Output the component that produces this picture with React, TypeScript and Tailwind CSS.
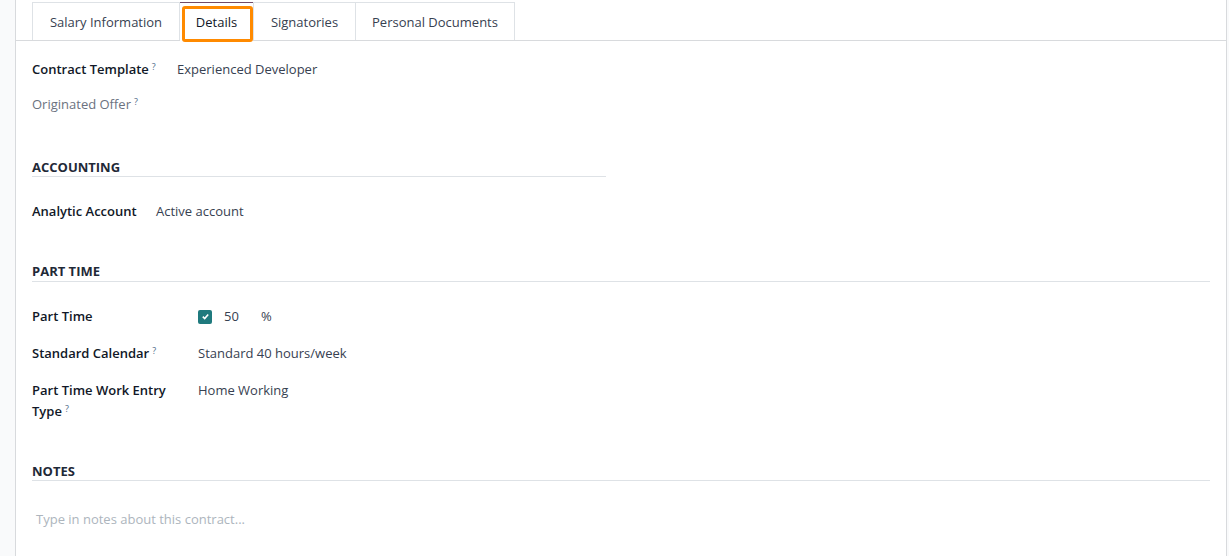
import React from "react";

const Q = () => <sup className="ml-[3px] text-[9px] font-normal text-[#4f6b8a] relative -top-[4px]">?</sup>;

const Heading = ({ children, className = "" }: { children: React.ReactNode; className?: string }) => (
  <div className={`border-b border-[#dee2e6] text-[13px] font-bold uppercase leading-[18px] text-[#1f2937] ${className}`}>{children}</div>
);

export default function App() {
  return (
    <div className="flex h-[556px] w-[1229px] bg-[#f9fafb] pl-[15px] pr-[2px] text-[13px] leading-[21px] text-[#374151]" style={{ fontFamily: '"Open Sans", "Noto Sans", sans-serif' }}>
      <div className="flex flex-1 flex-col border-x border-[#d8dadd] bg-white">
        {/* tabs */}
        <div className="mt-[2px] flex border-b border-[#d8dadd] pl-4">
          <div className="flex h-[38px] w-[148px] items-center justify-center border-x border-t border-[#dee2e6] pt-[2px]">Salary Information</div>
          <div className="relative -mb-px flex h-[39px] w-[73px] items-center justify-center border-t border-t-[#714b67] bg-white pt-[1px] text-[#111827]">
            <div className="absolute left-[2px] right-0 top-[3px] -bottom-px rounded-[3px] border-[3px] border-[#ff8a00]" />
            Details
          </div>
          <div className="flex h-[38px] w-[103px] items-center justify-center border-x border-t border-[#dee2e6] pt-[2px]">Signatories</div>
          <div className="flex h-[38px] w-[159px] items-center justify-center border-r border-t border-[#dee2e6] pt-[2px]">Personal Documents</div>
        </div>

        <div className="px-4">
          <div className="w-[574px]">
            <div className="mt-[18px] flex">
              <div className="w-[145px] font-semibold text-[#111827]">Contract Template<Q /></div>
              <div>Experienced Developer</div>
            </div>
            <div className="mt-[14px] text-[#6b7280]">Originated Offer<Q /></div>

            <Heading className="mt-[43px]">Accounting</Heading>
            <div className="mt-[24px] flex">
              <div className="w-[124px] font-semibold text-[#111827]">Analytic Account</div>
              <div>Active account</div>
            </div>
          </div>

          <Heading className="mt-[40px] pb-px">Part Time</Heading>

          <div className="mt-[24px] grid grid-cols-[166px_1fr] gap-y-[16px]">
            <div className="font-semibold text-[#111827]">Part Time</div>
            <div className="flex items-center">
              <span className="flex h-[14px] w-[14px] items-center justify-center rounded-[2px] bg-[#1f7a7e]">
                <svg width="9" height="9" viewBox="0 0 10 10"><path d="M2 5.2 L4.1 7.2 L8 2.8" stroke="white" strokeWidth="1.8" fill="none" /></svg>
              </span>
              <span className="ml-[12px]">50</span>
              <span className="ml-[22px]">%</span>
            </div>
            <div className="font-semibold text-[#111827]">Standard Calendar<Q /></div>
            <div>Standard 40 hours/week</div>
            <div className="font-semibold text-[#111827]">Part Time Work Entry<br />Type<Q /></div>
            <div>Home Working</div>
          </div>

          <Heading className="mt-[40px]">Notes</Heading>
          <div className="mt-[28px] pl-[4px] text-[#adb5bd]">Type in notes about this contract...</div>
        </div>
      </div>
    </div>
  );
}
